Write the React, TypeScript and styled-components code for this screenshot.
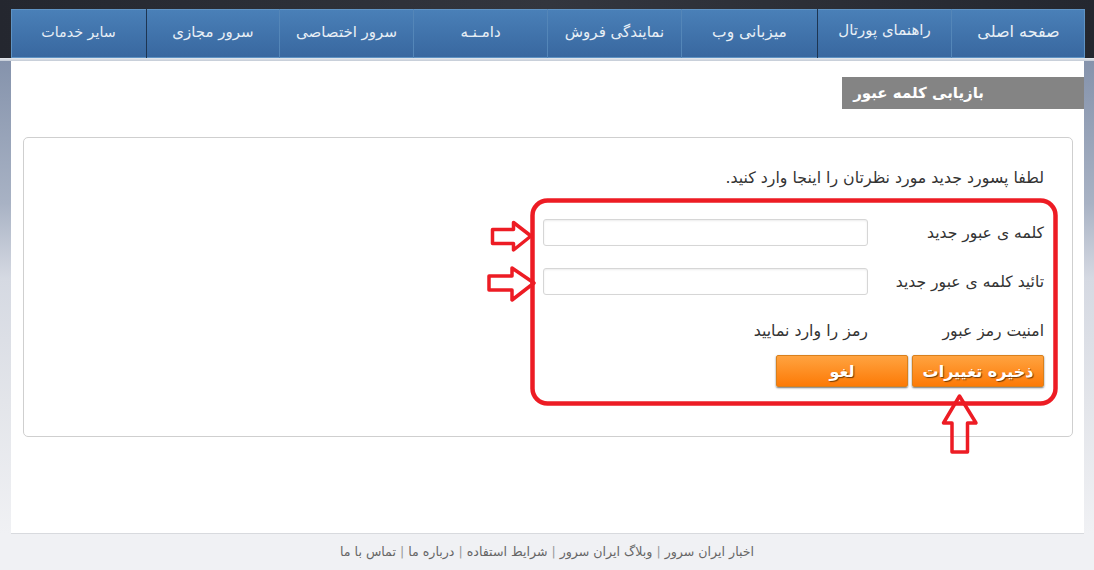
import React from 'react';
import styled, { createGlobalStyle } from 'styled-components';

const GlobalStyle = createGlobalStyle`
    html, body {
        margin: 0;
        padding: 0;
        background-color: #f0f1f4;
    }
    * {
        box-sizing: border-box;
    }
`;

const Page = styled.div`
    position: relative;
    width: 1094px;
    height: 570px;
    overflow: hidden;
    direction: rtl;
    font-family: "DejaVu Sans", sans-serif;
    background-color: #f0f1f4;
`;

const TopBar = styled.div`
    height: 58px;
    padding: 9px 9px 0 11px;
    background: linear-gradient(to right, #24272f, #33363e 50%, #24272f);
`;

const Nav = styled.nav`
    display: flex;
    height: 49px;
    background: linear-gradient(to bottom, #4a80b8, #38679f);
    box-shadow: inset 0 0 0 1px #5f93c4;
`;

const NavItem = styled.a<{ $width: number; $size: number; $dark?: boolean; $lift?: boolean }>`
    display: flex;
    align-items: center;
    justify-content: center;
    flex-shrink: 0;
    width: ${(p) => p.$width}px;
    padding-bottom: ${(p) => (p.$lift ? 8 : 4)}px;
    color: #e8eff6;
    font-size: ${(p) => p.$size}px;
    border-left: 1px solid ${(p) => (p.$dark ? '#1d3552' : '#5486b8')};

    &:last-child {
        border-left: none;
    }
`;

const Divider = styled.div`
    height: 3px;
    background: linear-gradient(to bottom, #e6e9ee, #c3cbd6);
`;

const MainArea = styled.div`
    height: 473px;
    padding: 0 10px 0 11px;
    background: linear-gradient(to bottom, #8593ac, #a8b2c4 30%, #d5d9e2 46%, #e3e5ea 72%, #f0f1f4);
`;

const Content = styled.main`
    height: 473px;
    padding-top: 16px;
    background-color: #fff;
    border-bottom: 1px solid #d8dade;
`;

const TitleBar = styled.h1`
    width: 242px;
    height: 32px;
    margin: 0;
    padding: 0 100px 0 0;
    display: flex;
    align-items: center;
    background-color: #848484;
    color: #fff;
    font-size: 15px;
    font-weight: bold;
    white-space: nowrap;
`;

const Card = styled.section`
    height: 300px;
    margin: 28px 11px 0 12px;
    padding: 30px 28px 0 0;
    border: 1px solid #cfcfcf;
    border-radius: 5px;
`;

const Intro = styled.p`
    margin: 0 0 31px;
    color: #333;
    font-size: 15.8px;
    line-height: 20px;
`;

const Row = styled.div`
    display: flex;
    align-items: center;
    height: 27px;
    margin-bottom: 22px;
`;

const Label = styled.label`
    width: 176px;
    flex-shrink: 0;
    color: #333;
    font-size: 15.6px;
    white-space: nowrap;
`;

const TextInput = styled.input`
    width: 325px;
    height: 27px;
    border: 1px solid #d6d6d6;
    border-radius: 3px;
    background-color: #fff;
    box-shadow: inset 0 1px 2px rgba(0, 0, 0, 0.08);
`;

const Hint = styled.span`
    color: #333;
    font-size: 15.8px;
`;

const Buttons = styled.div`
    display: flex;
    gap: 4px;
    margin-top: -11px;
`;

const OrangeButton = styled.button`
    width: 132px;
    height: 32px;
    padding: 0;
    border: 1px solid #d9801c;
    border-radius: 2px;
    background: linear-gradient(to bottom, #ffa340, #fd7a06);
    box-shadow: 0 1px 2px rgba(0, 0, 0, 0.55);
    color: #fff;
    font-family: inherit;
    font-size: 16px;
    font-weight: bold;
    text-shadow: 1px 1px 1px rgba(80, 40, 0, 0.8);
`;

const Footer = styled.footer`
    display: flex;
    justify-content: center;
    gap: 4px;
    height: 36px;
    padding-top: 10px;
    color: #666;
    font-size: 12.6px;
`;

const Separator = styled.span`
    color: #999;
`;

const Annotations = styled.svg`
    position: absolute;
    top: 0;
    left: 0;
    pointer-events: none;
`;

const navItems = [
    { label: 'صفحه اصلی', width: 134, size: 16 },
    { label: 'راهنمای پورتال', width: 134, size: 15, dark: true, lift: true },
    { label: 'میزبانی وب', width: 136, size: 15.5 },
    { label: 'نمایندگی فروش', width: 134, size: 15 },
    { label: 'دامـنـه', width: 134, size: 15 },
    { label: 'سرور اختصاصی', width: 134, size: 15 },
    { label: 'سرور مجازی', width: 133, size: 15, dark: true },
    { label: 'سایر خدمات', width: 135, size: 14.3 },
];

const footerLinks = ['اخبار ایران سرور', 'وبلاگ ایران سرور', 'شرایط استفاده', 'درباره ما', 'تماس با ما'];

const App: React.FC = () => {
    return (
        <Page>
            <GlobalStyle />
            <TopBar>
                <Nav>
                    {navItems.map((item) => (
                        <NavItem key={item.label} $width={item.width} $size={item.size} $dark={item.dark} $lift={item.lift}>{item.label}</NavItem>
                    ))}
                </Nav>
            </TopBar>
            <Divider />
            <MainArea>
                <Content>
                    <TitleBar>بازیابی کلمه عبور</TitleBar>
                    <Card>
                        <Intro>لطفا پسورد جدید مورد نظرتان را اینجا وارد کنید.</Intro>
                        <Row>
                            <Label>کلمه ی عبور جدید</Label>
                            <TextInput type="password" />
                        </Row>
                        <Row>
                            <Label>تائید کلمه ی عبور جدید</Label>
                            <TextInput type="password" />
                        </Row>
                        <Row>
                            <Label>امنیت رمز عبور</Label>
                            <Hint>رمز را وارد نمایید</Hint>
                        </Row>
                        <Buttons>
                            <OrangeButton>ذخیره تغییرات</OrangeButton>
                            <OrangeButton>لغو</OrangeButton>
                        </Buttons>
                    </Card>
                </Content>
            </MainArea>
            <Footer>
                {footerLinks.map((link, i) => (
                    <React.Fragment key={link}>
                        {i > 0 && <Separator>|</Separator>}
                        <span>{link}</span>
                    </React.Fragment>
                ))}
            </Footer>
            <Annotations width="1094" height="570" viewBox="0 0 1094 570" fill="none" stroke="#ed1c24" strokeWidth="3.5" strokeLinejoin="round">
                <rect x="532.5" y="200.5" width="523" height="203" rx="15" strokeWidth="4.5" />
                <path d="M492.5 229.5H513.5V222.5L531 236L513.5 250V243.5H492.5Z" />
                <path d="M489 276H512V268L534 283L512 300V290H489Z" />
                <path d="M952 452V423H943.5L959.5 396L976 423H967.5V452Z" />
            </Annotations>
        </Page>
    );
};

export default App;
